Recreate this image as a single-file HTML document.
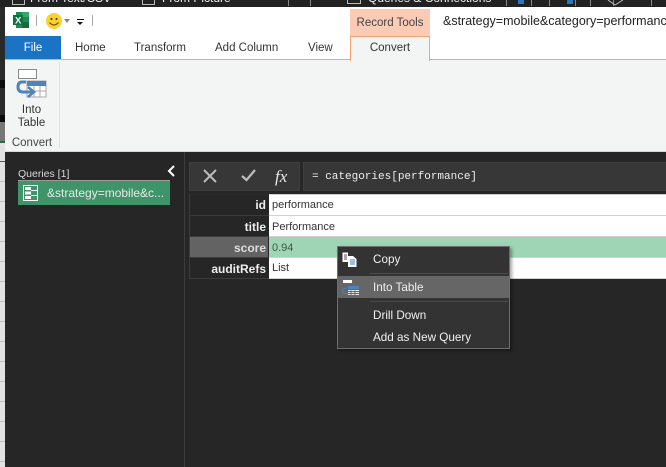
<!DOCTYPE html>
<html><head><meta charset="utf-8">
<style>
html,body{margin:0;padding:0;width:666px;height:467px;overflow:hidden;background:#262626}
body{position:relative;font-family:"Liberation Sans",sans-serif;font-size:11.5px;color:#333}
div,span{position:absolute;white-space:nowrap}
svg{position:absolute;overflow:visible}
.w{color:#f0f0f0}
.b{font-weight:bold;color:#eee;font-size:12px;text-align:right;width:76px;left:190px}
.c{left:272px;font-size:11px;color:#333}
.line{background:#d2d2d2;height:1px;left:269px;right:0}
.hl{background:#2a2a2a;height:1px;left:189px;width:80px}
.m{left:373px;color:#f0f0f0;font-size:11.7px}
</style></head><body>
<!-- top strip -->
<div style="left:0;top:0;width:666px;height:7px;background:#222"></div>
<div class="w" style="left:30px;top:-9px;font-size:12px">From Text/CSV</div>
<div class="w" style="left:162px;top:-9px;font-size:12px">From Picture</div>
<div class="w" style="left:368px;top:-9px;font-size:12px">Queries &amp; Connections</div>
<div style="left:12px;top:-2px;width:11px;height:5px;border:1px solid #bbb"></div>
<div style="left:142px;top:-2px;width:11px;height:5px;border:1px solid #bbb"></div>
<div style="left:347px;top:-2px;width:12px;height:4px;border:1px solid #bbb"></div>
<div style="left:288px;top:0;width:1px;height:6px;background:#888"></div>
<div style="left:310px;top:0;width:1px;height:6px;background:#888"></div>
<div style="left:506px;top:0;width:1px;height:6px;background:#888"></div>
<div style="left:531px;top:0;width:1px;height:6px;background:#888"></div>
<div style="left:549px;top:0;width:1px;height:6px;background:#888"></div>
<div style="left:575px;top:0;width:1px;height:6px;background:#888"></div>
<div style="left:590px;top:0;width:1px;height:6px;background:#888"></div>
<div style="left:613px;top:0;width:1px;height:6px;background:#888"></div>
<div style="left:651px;top:0;width:1px;height:6px;background:#888"></div>
<div style="left:518px;top:-3px;width:6px;height:7px;background:#2b78c0"></div>
<div style="left:567px;top:-3px;width:6px;height:7px;background:#2b78c0"></div>
<svg style="left:606px;top:0" width="30" height="6"><path d="M2 0L9 5L17 0" fill="none" stroke="#bbb"/></svg>

<!-- left sliver of the sheet behind -->
<div style="left:0;top:7px;width:5px;height:460px;background:#2a2a2a"></div>
<div style="left:0;top:80px;width:5px;height:8px;background:#0c0c0c"></div>
<div style="left:0;top:115px;width:5px;height:7px;background:#0c0c0c"></div>
<div style="left:0;top:122px;width:5px;height:20px;background:#777"></div>
<div style="left:0;top:142px;width:5px;height:325px;background:repeating-linear-gradient(#e2e2e2 0,#e2e2e2 19px,#bdbdbd 19px,#bdbdbd 20px)"></div>
<div style="left:0;top:141px;width:5px;height:2px;background:#1f7244"></div>
<div style="left:0;top:161px;width:5px;height:1px;background:#1f7244"></div>

<!-- title + tab bar -->
<div style="left:5px;top:7px;width:661px;height:52px;background:#fff"></div>
<svg style="left:13px;top:12px" width="17" height="16">
<rect x="3" y="0" width="13" height="16" fill="#1d8a50"/><rect x="9" y="0" width="7" height="5" fill="#33a86b"/><rect x="9" y="10" width="7" height="6" fill="#17683b"/>
<rect x="0" y="3" width="10" height="10" fill="#117040"/>
<text x="2" y="11.500" font-family="Liberation Sans" font-size="9.500" font-weight="bold" fill="#fff">X</text></svg>
<div style="left:36px;top:15px;width:1px;height:11px;background:#aaa"></div>
<svg style="left:46px;top:13px" width="17" height="17">
<circle cx="8" cy="8" r="8" fill="#fcd22e"/><circle cx="5.500" cy="6" r="1.100" fill="#5a4a10"/><circle cx="10.500" cy="6" r="1.100" fill="#5a4a10"/>
<path d="M3.500 9.500Q8 14.500 12.500 9.500" fill="none" stroke="#5a4a10" stroke-width="1.100"/></svg>
<div style="left:64px;top:19px;width:0;height:0;border:3px solid transparent;border-top:4px solid #888;border-bottom:0"></div>
<div style="left:77px;top:19px;width:7px;height:1px;background:#111"></div>
<div style="left:77px;top:22px;width:0;height:0;border:3.500px solid transparent;border-top:3.500px solid #111;border-bottom:0"></div>
<div style="left:92px;top:15px;width:1px;height:11px;background:#aaa"></div>
<div style="left:350px;top:9px;width:80px;height:27px;background:#fccbb5"></div>
<div style="left:350px;top:17px;width:80px;text-align:center;font-size:11.500px;color:#444">Record Tools</div>
<div style="left:443px;top:14px;font-size:12.500px;color:#222;width:223px;overflow:hidden">&amp;strategy=mobile&amp;category=performance</div>
<div style="left:5px;top:36px;width:56px;height:23px;background:#1b73c4"></div>
<div style="left:5px;top:42px;width:56px;text-align:center;color:#fff;font-size:11.500px">File</div>
<div style="left:75px;top:42px;color:#333">Home</div>
<div style="left:134px;top:42px;color:#333">Transform</div>
<div style="left:215px;top:42px;color:#333">Add Column</div>
<div style="left:308px;top:42px;color:#333">View</div>
<!-- ribbon -->
<div style="left:5px;top:60px;width:661px;height:91px;background:#f3f5f4"></div>
<div style="left:5px;top:59px;width:661px;height:1px;background:#f5a57c"></div>
<div style="left:350px;top:36px;width:78px;height:24px;background:#f3f5f4;border:1px solid #f8a36f;border-bottom:0"></div>
<div style="left:350px;top:42px;width:80px;text-align:center;color:#333">Convert</div>
<div style="left:59px;top:62px;width:1px;height:86px;background:#e0e2e1"></div>
<div style="left:5px;top:151px;width:661px;height:1px;background:#d8d8d8"></div>
<svg style="left:16px;top:69px" width="31" height="30">
<rect x="2.500" y="0.500" width="18" height="9" fill="#fff" stroke="#8a8a8a"/>
<rect x="11" y="12" width="19" height="16" fill="#fff" stroke="#a8a8a8"/>
<rect x="11" y="12" width="19" height="5" fill="#4f83bb"/>
<path d="M18 17V28M24 17V28M11 22H30" stroke="#a8a8a8" fill="none"/>
<path d="M10 13H6Q2 13 2 18Q2 23 7 23H16" fill="none" stroke="#4f83bb" stroke-width="3"/>
<path d="M12 18L18 23L12 28" fill="none" stroke="#4f83bb" stroke-width="2.500"/></svg>
<div style="left:5px;top:104px;width:53px;text-align:center;color:#333">Into</div>
<div style="left:5px;top:117px;width:53px;text-align:center;color:#333">Table</div>
<div style="left:5px;top:137px;width:54px;text-align:center;color:#444">Convert</div>

<!-- dark area -->
<div style="left:5px;top:152px;width:661px;height:315px;background:#262626"></div>
<div style="left:184px;top:152px;width:1px;height:315px;background:#3c3c3c"></div>
<div style="left:18px;top:168px;font-size:10.500px;color:#d8d8d8">Queries [1]</div>
<svg style="left:167px;top:165px" width="9" height="12"><path d="M7 1L2 6L7 11" fill="none" stroke="#fff" stroke-width="2"/></svg>
<div style="left:18px;top:180px;width:152px;height:25px;background:#3f9569"></div>
<div style="left:18px;top:180px;width:152px;height:1px;background:#9a9a9a"></div>
<svg style="left:23px;top:185px" width="15" height="16"><rect x="0.500" y="0.500" width="14" height="15" fill="none" stroke="#fff"/><path d="M2 2H8V5H2ZM2 6.500H8V9.500H2ZM2 11H8V14H2Z" fill="#fff"/><path d="M8 5.500H14M8 10.500H14" stroke="#fff"/></svg>
<div style="left:47px;top:186px;font-size:12px;color:#e8e8e8">&amp;strategy=mobile&amp;c...</div>

<!-- formula bar -->
<div style="left:189px;top:162px;width:109px;height:27px;background:#373737;border:1px solid #3f3f3f;box-sizing:content-box"></div>
<svg style="left:203px;top:169px" width="14" height="14"><path d="M1 1L13 13M13 1L1 13" stroke="#bcbcbc" stroke-width="2"/></svg>
<svg style="left:241px;top:169px" width="15" height="13"><path d="M1 7L5.500 11L14 1" fill="none" stroke="#bcbcbc" stroke-width="2.300"/></svg>
<div style="left:275px;top:167px;font-family:'Liberation Serif',serif;font-style:italic;font-size:17px;color:#e8e8e8">fx</div>
<div style="left:303px;top:162px;width:363px;height:27px;background:#373737;border:1px solid #3f3f3f;border-right:0"></div>
<div style="left:312px;top:171px;font-family:'Liberation Mono',monospace;font-size:11px;color:#eee">= categories[performance]</div>

<!-- record table -->
<div style="left:269px;top:195px;right:0;height:84px;background:#fff"></div>
<div style="left:269px;top:237px;right:0;height:20px;background:#9fd4b5"></div>
<div style="left:190px;top:237px;width:78px;height:20px;background:#636363"></div>
<div class="line" style="top:194px"></div>
<div class="line" style="top:215px"></div>
<div class="line" style="top:236px"></div>
<div class="line" style="top:257px"></div>
<div class="line" style="top:278px"></div>
<div class="hl" style="top:194px"></div>
<div class="hl" style="top:215px;background:#3c3c3c"></div>
<div class="hl" style="top:236px;background:#3c3c3c"></div>
<div class="hl" style="top:257px;background:#3c3c3c"></div>
<div class="hl" style="top:278px;background:#3c3c3c"></div>
<div style="left:189px;top:194px;width:1px;height:85px;background:#3c3c3c"></div>
<div class="b" style="top:198px;">id</div>
<div class="b" style="top:220px">title</div>
<div class="b" style="top:241px;color:#ddd">score</div>
<div class="b" style="top:262px">auditRefs</div>
<div class="c" style="top:199px">performance</div>
<div class="c" style="top:221px">Performance</div>
<div class="c" style="top:242px;color:#3d5a49">0.94</div>
<div class="c" style="top:262px">List</div>

<!-- context menu -->
<div style="left:337px;top:246px;width:171px;height:101px;background:#333;border:1px solid #6e6e6e;box-shadow:2px 2px 3px rgba(0,0,0,.35)"></div>
<div style="left:338px;top:276px;width:171px;height:22px;background:#666"></div>
<div style="left:370px;top:273px;width:138px;height:1px;background:#4c4c4c"></div>
<div style="left:370px;top:301px;width:138px;height:1px;background:#4c4c4c"></div>
<svg style="left:342px;top:252px" width="16" height="16"><path d="M0.500 0.500H6V10H0.500Z" fill="#fff"/><path d="M2 3H5M2 5H5M2 7H5" stroke="#555"/><path d="M6 4H11L14.500 7V15H6Z" fill="#fff"/><path d="M8 8H13M8 10H13M8 12H13" stroke="#3d7fc0"/></svg>
<svg style="left:342px;top:280px" width="17" height="15"><rect x="1" y="0" width="9" height="3" fill="#fff"/><rect x="6" y="6" width="11" height="3" fill="#4f83bb"/><path d="M6 10.500H17M6 12.500H17M6 14.500H17" stroke="#e8e8e8"/><path d="M9 10.500V15M13 10.500V15" stroke="#666"/><path d="M5 8Q0 8.500 0.500 11.500Q1 14 6 13" fill="none" stroke="#4f83bb"/></svg>
<div class="m" style="top:253px">Copy</div>
<div class="m" style="top:281px">Into Table</div>
<div class="m" style="top:309px">Drill Down</div>
<div class="m" style="top:331px">Add as New Query</div>
</body></html>
